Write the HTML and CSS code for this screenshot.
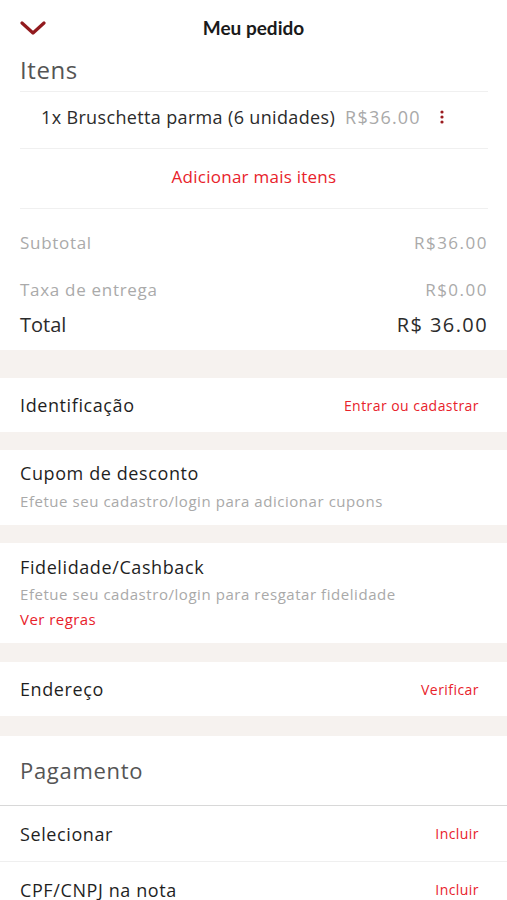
FILE: index.html
```html
<!DOCTYPE html>
<html lang="pt-BR">
<head>
    <meta charset="UTF-8">
    <meta name="viewport" content="width=device-width, initial-scale=1.0">
    <title>Meu pedido</title>
    <link rel="stylesheet" href="styles.css">
</head>
<body>
    <div class="header">
        <svg class="back" width="26" height="14" viewBox="0 0 26 14">
            <path d="M2 2 L13 12 L24 2" fill="none" stroke="#921a1e" stroke-width="3.2" stroke-linecap="round" stroke-linejoin="round"/>
        </svg>
        <h1>Meu pedido</h1>
    </div>

    <div class="section items">
        <h2 class="section-title">Itens</h2>
        <div class="item">
            <span class="item-name">1x Bruschetta parma (6 unidades)</span>
            <span class="item-price money">R$36.00</span>
            <svg class="more" width="4" height="14" viewBox="0 0 4 14">
                <circle cx="2" cy="2" r="1.6" fill="#9b1b1f"/>
                <circle cx="2" cy="7" r="1.6" fill="#9b1b1f"/>
                <circle cx="2" cy="12" r="1.6" fill="#9b1b1f"/>
            </svg>
        </div>
        <div class="add-more">Adicionar mais itens</div>
        <div class="summary">
            <div class="sum-row muted sub">
                <span>Subtotal</span><span class="money">R$36.00</span>
            </div>
            <div class="sum-row muted fee">
                <span>Taxa de entrega</span><span class="money">R$0.00</span>
            </div>
            <div class="sum-row total">
                <span>Total</span><span class="money">R$ 36.00</span>
            </div>
        </div>
    </div>

    <div class="section row ident">
        <span class="row-title">Identificação</span>
        <span class="link">Entrar ou cadastrar</span>
    </div>

    <div class="section block coupon">
        <div class="row-title">Cupom de desconto</div>
        <div class="hint">Efetue seu cadastro/login para adicionar cupons</div>
    </div>

    <div class="section block loyalty">
        <div class="row-title">Fidelidade/Cashback</div>
        <div class="hint">Efetue seu cadastro/login para resgatar fidelidade</div>
        <div class="link rules">Ver regras</div>
    </div>

    <div class="section row address">
        <span class="row-title">Endereço</span>
        <span class="link">Verificar</span>
    </div>

    <div class="section payment">
        <h2 class="section-title pay-title">Pagamento</h2>
        <div class="pay-row">
            <span class="row-title">Selecionar</span>
            <span class="link">Incluir</span>
        </div>
        <div class="pay-row">
            <span class="row-title">CPF/CNPJ na nota</span>
            <span class="link">Incluir</span>
        </div>
    </div>
</body>
</html>
```

FILE: styles.css
```css
body {
    margin: 0;
    font-family: "Open Sans", "Noto Sans", sans-serif;
    background-color: #f6f2ef;
    color: #2b2b2b;
    overflow: hidden;
}

.header {
    position: relative;
    height: 52px;
    display: flex;
    align-items: center;
    justify-content: center;
    background-color: #fff;
}

.header .back {
    position: absolute;
    left: 20px;
    top: 21px;
}

.header h1 {
    margin: 0;
    font-family: Lato, sans-serif;
    font-size: 19px;
    font-weight: 700;
    color: #1a1a1a;
    padding-top: 2px;
}

.section {
    background-color: #fff;
}

.section-title {
    margin: 0;
    font-weight: 400;
    color: #555;
}

.items {
    padding: 0 19px 0 20px;
    margin-bottom: 28px;
}

.items .section-title {
    height: 39px;
    line-height: 36px;
    font-size: 24px;
    letter-spacing: 0.6px;
}

.money {
    letter-spacing: 1.5px;
}

.item {
    display: flex;
    align-items: center;
    height: 57px;
    padding: 0 0 6px 21px;
    box-sizing: border-box;
    border-top: 1px solid #f0f0f0;
    font-size: 18px;
}

.item-name {
    color: #2b2b2b;
    letter-spacing: 0.35px;
}

.item-price {
    margin-left: 10px;
    color: #a9a9a9;
    letter-spacing: 1.2px;
}

.item .more {
    margin-left: 19px;
}

.add-more {
    height: 59px;
    line-height: 56px;
    text-align: center;
    font-size: 17px;
    letter-spacing: 0.25px;
    color: #e8222b;
    border-top: 1px solid #f0f0f0;
    border-bottom: 1px solid #f0f0f0;
}

.summary {
    padding-top: 16px;
    padding-bottom: 9px;
}

.sum-row {
    display: flex;
    justify-content: space-between;
    align-items: center;
}

.sum-row.muted {
    color: #aaa;
    font-size: 17px;
    letter-spacing: 0.7px;
}

.sum-row.muted .money {
    letter-spacing: 1.5px;
}

.sum-row.sub {
    height: 34px;
}

.sum-row.fee {
    height: 48px;
    padding-top: 12px;
    box-sizing: border-box;
}

.sum-row.total {
    height: 34px;
    font-size: 20px;
    color: #2b2b2b;
}

.sum-row.total .money {
    letter-spacing: 1.4px;
}

.row {
    display: flex;
    justify-content: space-between;
    align-items: center;
    height: 54px;
    padding: 0 28px 0 20px;
}

.row-title {
    font-size: 18px;
    line-height: 24px;
    letter-spacing: 0.6px;
    color: #1f1f1f;
}

.link {
    font-size: 14px;
    letter-spacing: 0.45px;
    color: #e8222b;
}

.ident {
    margin-bottom: 18px;
}

.block {
    padding: 0 20px;
    box-sizing: border-box;
}

.hint {
    font-size: 15px;
    line-height: 20px;
    letter-spacing: 0.55px;
    color: #a9a9a9;
}

.coupon {
    height: 75px;
    padding-top: 11px;
    margin-bottom: 18px;
}

.coupon .hint {
    margin-top: 6px;
}

.loyalty {
    height: 100px;
    padding-top: 12px;
    margin-bottom: 19px;
}

.loyalty .hint {
    margin-top: 5px;
}

.loyalty .rules {
    margin-top: 5px;
    font-size: 15px;
    line-height: 20px;
}

.address {
    margin-bottom: 20px;
}

.payment {
    padding-bottom: 40px;
}

.pay-title {
    height: 69px;
    line-height: 68px;
    padding-left: 20px;
    font-size: 22px;
    letter-spacing: 0.7px;
    border-bottom: 1px solid #d8d8d8;
}

.pay-row {
    display: flex;
    justify-content: space-between;
    align-items: center;
    height: 55px;
    padding: 0 28px 0 20px;
    border-bottom: 1px solid #efefef;
}
```
